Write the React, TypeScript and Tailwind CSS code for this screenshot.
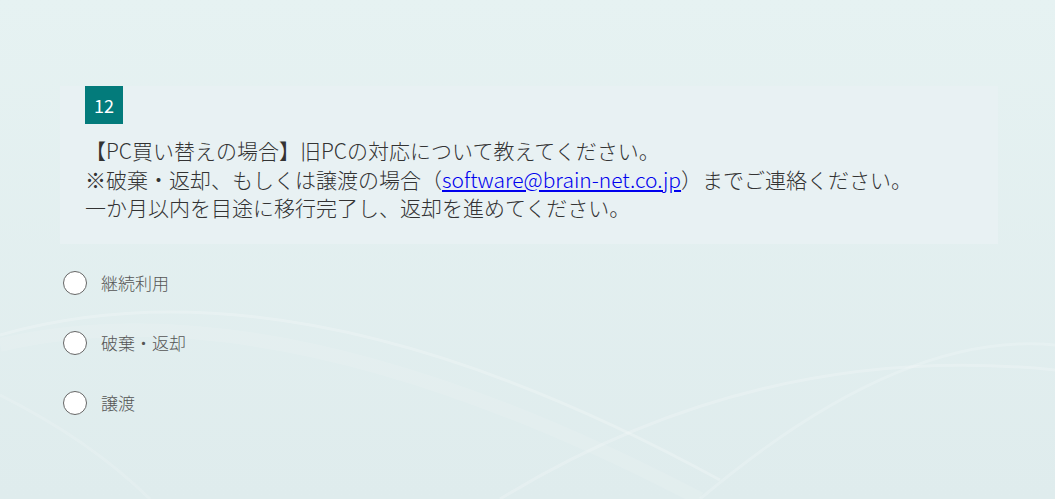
import React from "react";

const options = ["継続利用", "破棄・返却", "譲渡"];

const Backdrop: React.FC = () => (
  <svg
    className="absolute inset-0 w-full h-full pointer-events-none"
    viewBox="0 0 1055 499"
    preserveAspectRatio="none"
  >
    <path d="M0 335 Q 300 250 720 480" stroke="#ffffff" strokeOpacity="0.22" strokeWidth="3" fill="none" />
    <path d="M0 345 Q 280 280 700 499" stroke="#ffffff" strokeOpacity="0.1" strokeWidth="14" fill="none" />
    <path d="M500 499 Q 760 340 1055 370" stroke="#ffffff" strokeOpacity="0.2" strokeWidth="3" fill="none" />
    <path d="M700 499 Q 900 330 1055 345" stroke="#ffffff" strokeOpacity="0.18" strokeWidth="3" fill="none" />
    <path d="M0 395 Q 90 440 150 499" stroke="#ffffff" strokeOpacity="0.15" strokeWidth="3" fill="none" />
  </svg>
);

const App: React.FC = () => {
  return (
    <div
      className="relative w-[1055px] h-[499px] overflow-hidden bg-gradient-to-b from-[#e6f2f2] to-[#dfeced]"
      style={{ fontFamily: '"Noto Sans CJK JP", "Noto Sans", sans-serif' }}
    >
      <Backdrop />
      <div className="relative flex flex-col pl-[60px] pr-[57px] pt-[86px]">
        <div className="bg-[#e8f1f3] pl-[25px] pr-6 pb-[22px]">
          <div className="w-[38px] h-[38px] bg-[#037b7b] text-white flex items-center justify-center text-[18px]">
            12
          </div>
          <div className="mt-[12px] text-[21px] leading-[28.5px] text-[#333333] font-light">
            <p>【PC買い替えの場合】旧PCの対応について教えてください。</p>
            <p>
              ※破棄・返却、もしくは譲渡の場合（
              <a href="#" className="text-[#0000ee] underline">
                software@brain-net.co.jp
              </a>
              ）までご連絡ください。
            </p>
            <p>一か月以内を目途に移行完了し、返却を進めてください。</p>
          </div>
        </div>
        <div className="flex flex-col gap-[36px] mt-[27px] pl-[3px]">
          {options.map((o) => (
            <label key={o} className="flex items-center gap-[14px] h-[24px] cursor-pointer">
              <span className="w-[24px] h-[24px] rounded-full border-[1.5px] border-[#666666] bg-white shrink-0" />
              <span className="text-[17px] text-[#555555] font-light">{o}</span>
            </label>
          ))}
        </div>
      </div>
    </div>
  );
};

export default App;
